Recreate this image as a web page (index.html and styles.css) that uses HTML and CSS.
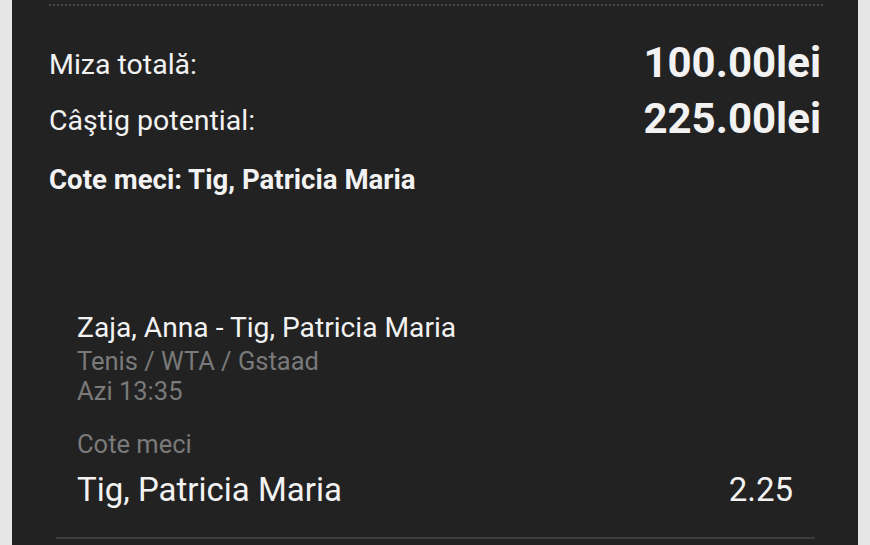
FILE: index.html
```html
<!DOCTYPE html>
<html>
<head>
<meta charset="utf-8">
<link rel="stylesheet" href="styles.css">
</head>
<body>
<div class="panel">
  <div class="dots"></div>
  <div class="summary">
    <div class="row"><span class="label">Miza totală:</span><span class="amount">100.00lei</span></div>
    <div class="row"><span class="label">Câştig potential:</span><span class="amount">225.00lei</span></div>
    <div class="title">Cote meci: Tig, Patricia Maria</div>
  </div>
  <div class="bet">
    <div class="match">Zaja, Anna - Tig, Patricia Maria</div>
    <div class="meta first">Tenis / WTA / Gstaad</div>
    <div class="meta">Azi 13:35</div>
    <div class="market">Cote meci</div>
    <div class="pick"><span>Tig, Patricia Maria</span><span>2.25</span></div>
  </div>
  <div class="rule"></div>
</div>
</body>
</html>
```
FILE: styles.css
```css
html, body {
  margin: 0;
  padding: 0;
  background: #e6e6e6;
  height: 545px;
  overflow: hidden;
}
body {
  padding: 0 12px;
  font-family: Roboto, "Liberation Sans", sans-serif;
}
.panel {
  background: #222222;
  height: 545px;
  color: #f2f2f2;
  box-sizing: border-box;
}
.dots {
  margin: 0 33px 0 37px;
  padding-top: 4px;
  height: 2px;
  background-clip: content-box;
  background-image: repeating-linear-gradient(90deg, #4a4a4a 0 2px, transparent 2px 4px);
  background-origin: content-box;
}
.summary {
  padding: 28px 37px 0 37px;
}
.row {
  display: flex;
  justify-content: space-between;
  align-items: center;
  height: 56px;
}
.label {
  font-size: 28.5px;
  position: relative;
  top: 2px;
}
.amount {
  font-size: 42px;
  font-weight: 700;
}
.title {
  margin-top: 17px;
  font-size: 27.6px;
  line-height: 34px;
  font-weight: 700;
}
.bet {
  padding: 115px 65px 0 65px;
}
.match {
  font-size: 28.2px;
  line-height: 32px;
}
.meta {
  font-size: 25.5px;
  color: #7a7a7a;
  line-height: 30px;
}
.meta.first {
  margin-top: 2px;
}
.market {
  margin-top: 23px;
  font-size: 25.5px;
  color: #7a7a7a;
  line-height: 30px;
}
.pick {
  margin-top: 13px;
  display: flex;
  justify-content: space-between;
  font-size: 33px;
  line-height: 36px;
}
.rule {
  margin: 29px 43px 0 44px;
  height: 2px;
  background: #3c3c3c;
}
```
